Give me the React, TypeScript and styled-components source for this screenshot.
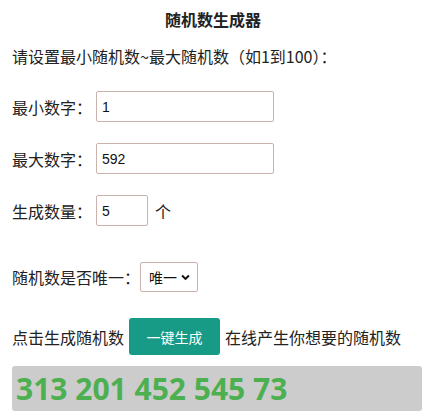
import React, { useState } from "react";
import styled, { createGlobalStyle } from "styled-components";

const GlobalStyle = createGlobalStyle`
	body {
		margin: 0;
		background: #fff;
		color: #222;
		font-family: "Noto Sans CJK SC", "Liberation Sans", sans-serif;
	}
`;

const App: React.FC = () => {
	const [unique, setUnique] = useState("1");

	return (
		<Page>
			<GlobalStyle />
			<Title>随机数生成器</Title>
			<Intro>请设置最小随机数~最大随机数（如1到100）：</Intro>

			<FieldRow $top={25}>
				<Label>最小数字：</Label>
				<NumberInput defaultValue="1" $width={178} />
			</FieldRow>
			<FieldRow $top={21}>
				<Label>最大数字：</Label>
				<NumberInput defaultValue="592" $width={178} />
			</FieldRow>
			<FieldRow $top={21}>
				<Label>生成数量：</Label>
				<NumberInput defaultValue="5" $width={52} />
				<Unit>个</Unit>
			</FieldRow>

			<FieldRow $top={36} $gap={0}>
				<Label>随机数是否唯一：</Label>
				<SelectBox>
					<Select value={unique} onChange={(e) => setUnique(e.target.value)}>
						<option value="1">唯一</option>
						<option value="0">不唯一</option>
					</Select>
					<Chevron viewBox="0 0 10 7">
						<path d="M1.2 1.2 L5 5 L8.8 1.2" fill="none" stroke="#111" strokeWidth="2.2" />
					</Chevron>
				</SelectBox>
			</FieldRow>

			<ActionRow>
				<Label>点击生成随机数</Label>
				<GenerateButton type="button">一键生成</GenerateButton>
				<Label>在线产生你想要的随机数</Label>
			</ActionRow>

			<Result>313 201 452 545 73</Result>
		</Page>
	);
};

export default App;

const Page = styled.div`
	display: flex;
	flex-direction: column;
	padding: 9px 11px 0 12px;
	font-size: 16px;
`;

const Title = styled.h1`
	margin: 0;
	font-size: 16px;
	line-height: 20px;
	font-weight: 700;
	text-align: center;
	color: #222;
`;

const Intro = styled.p`
	margin: 17px 0 0;
	line-height: 20px;
	color: #222;
`;

const FieldRow = styled.div<{ $top: number; $gap?: number }>`
	display: flex;
	align-items: center;
	gap: ${(p) => (p.$gap ?? 4)}px;
	margin-top: ${(p) => p.$top}px;
`;

const Label = styled.span`
	line-height: 20px;
	white-space: nowrap;
	color: #222;
`;

const NumberInput = styled.input<{ $width: number }>`
	box-sizing: border-box;
	width: ${(p) => p.$width}px;
	height: 31px;
	padding: 0 5px;
	border: 1px solid #c9b3aa;
	border-radius: 2px;
	font-family: "Liberation Sans", Arial, sans-serif;
	font-size: 14px;
	color: #111;
	outline: none;
`;

const Unit = styled.span`
	margin-left: 3px;
	line-height: 20px;
	color: #222;
`;

const SelectBox = styled.div`
	box-sizing: border-box;
	display: flex;
	align-items: center;
	width: 58px;
	height: 30px;
	padding: 0 7px 0 8px;
	border: 1px solid #c9b3aa;
	border-radius: 2px;
	background: #fff;
`;

const Select = styled.select`
	flex: 1;
	min-width: 0;
	appearance: none;
	border: none;
	background: transparent;
	padding: 0;
	font-family: "Noto Sans CJK SC", sans-serif;
	font-size: 14px;
	color: #111;
	outline: none;
`;

const Chevron = styled.svg`
	width: 9px;
	height: 7px;
	pointer-events: none;
`;

const ActionRow = styled.div`
	display: flex;
	align-items: center;
	gap: 5px;
	margin-top: 26px;
`;

const GenerateButton = styled.button`
	width: 91px;
	height: 37px;
	border: none;
	border-radius: 3px;
	background: #179a86;
	color: #fff;
	font-family: "Noto Sans CJK SC", sans-serif;
	font-size: 14px;
	cursor: pointer;
`;

const Result = styled.div`
	box-sizing: border-box;
	display: flex;
	align-items: center;
	width: 410px;
	height: 45px;
	margin-top: 11px;
	padding-left: 4px;
	border-radius: 3px;
	background: #cccccc;
	color: #4caf50;
	font-family: "Open Sans", sans-serif;
	font-size: 30px;
	font-weight: 700;
`;
